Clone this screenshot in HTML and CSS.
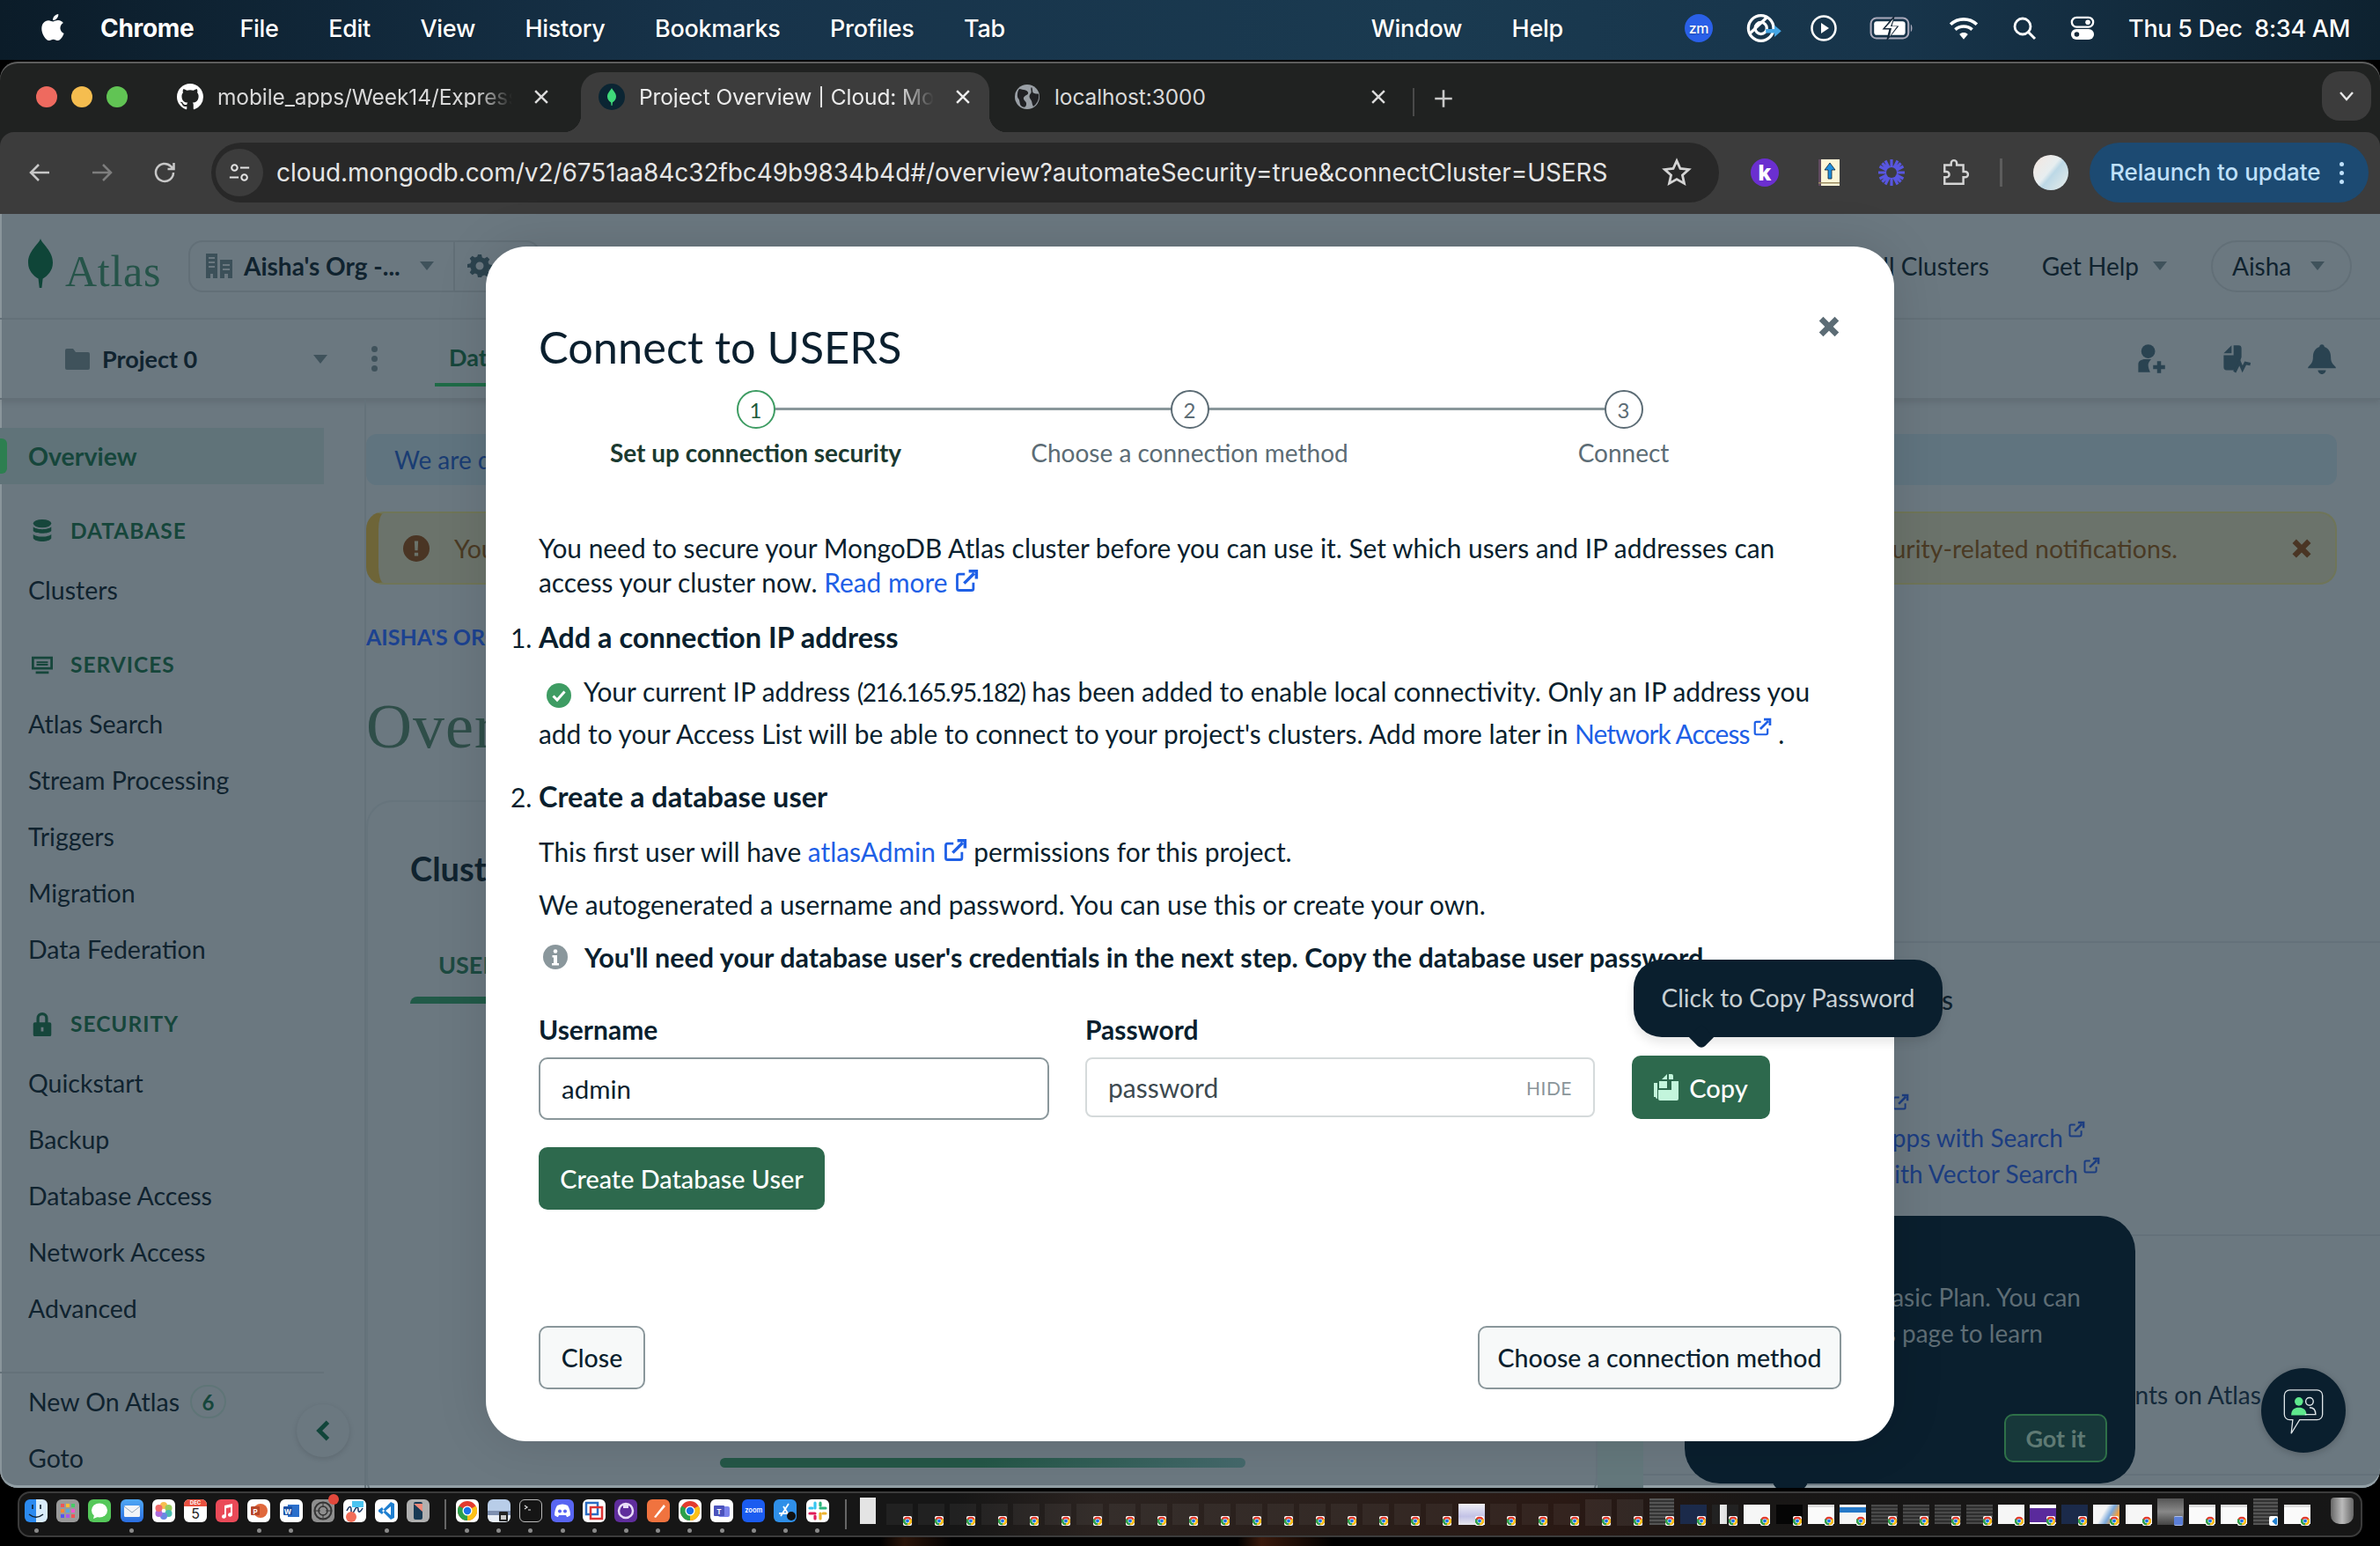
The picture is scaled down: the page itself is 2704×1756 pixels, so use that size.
FILE: index.html
```html
<!DOCTYPE html>
<html lang="en">
<head>
<meta charset="utf-8">
<title>Project Overview | Cloud: MongoDB Cloud</title>
<link rel="stylesheet" href="styles.css">
</head>
<body>
<svg class="defs" aria-hidden="true">
  <symbol id="ext" viewBox="0 0 16 16"><path d="M7 3.5H3.2a1.2 1.2 0 0 0-1.2 1.2v8.1A1.2 1.2 0 0 0 3.2 14h8.1a1.2 1.2 0 0 0 1.2-1.2V9" fill="none" stroke="currentColor" stroke-width="1.6"/><path d="M6.5 9.5 13 3M9.5 1.5H14.500V6.500" fill="none" stroke="currentColor" stroke-width="2"/></symbol>
  <symbol id="tri" viewBox="0 0 16 10"><path d="M0 0h16L8 10z" fill="currentColor"/></symbol>
  <symbol id="x" viewBox="0 0 16 16"><path d="M2 4.500 4.500 2 8 5.500 11.500 2 14 4.500 10.500 8 14 11.500 11.500 14 8 10.500 4.500 14 2 11.500 5.500 8z" fill="currentColor"/></symbol>
  <symbol id="chr" viewBox="0 0 24 24"><circle cx="12" cy="12" r="12" fill="#e33b2e"/><path d="M12 12 1.600 6 A12 12 0 0 0 12 24z" fill="#2ba14b"/><path d="M12 12 22.400 6A12 12 0 0 1 12 24z" fill="#fbc116"/><circle cx="12" cy="12" r="6" fill="#fff"/><circle cx="12" cy="12" r="4.600" fill="#1a73e8"/></symbol>
  <symbol id="leaf" viewBox="0 0 16 32"><path d="M8 0c1 3.500 8 8 8 15.500 0 5.500-3.500 8.500-6.500 10.500L8.800 32H7.300l-.7-6C3.500 24 0 21 0 15.500 0 8 7 3.500 8 0z" fill="currentColor"/></symbol>
</svg>

<header class="menubar">
  <svg class="apple" viewBox="0 0 24 24"><path d="M17.050 20.280c-.98.950-2.050.800-3.080.350-1.090-.460-2.090-.480-3.240 0-1.440.620-2.200.440-3.060-.350C2.790 15.250 3.510 7.590 9.050 7.310c1.350.070 2.290.740 3.080.800 1.180-.240 2.310-.930 3.570-.840 1.510.120 2.650.720 3.400 1.800-3.120 1.870-2.380 5.980.480 7.130-.57 1.500-1.310 2.990-2.540 4.090zM12.030 7.250c-.150-2.230 1.660-4.070 3.740-4.250.290 2.580-2.340 4.500-3.740 4.250z" fill="#fff"/></svg>
  <nav class="mb-menu">
    <b>Chrome</b><span>File</span><span>Edit</span><span>View</span><span>History</span><span>Bookmarks</span><span>Profiles</span><span>Tab</span>
  </nav>
  <nav class="mb-menu mb-right"><span>Window</span><span>Help</span></nav>
  <div class="tray">
    <svg class="t-ic t-zm" viewBox="0 0 32 32"><circle cx="16" cy="16" r="16" fill="#2a60e8"/><text x="16" y="21.500" font-size="16" text-anchor="middle" fill="#fff" font-family="Inter">zm</text></svg>
    <svg class="t-ic t-cc" viewBox="0 0 40 32"><g fill="none" stroke="#fff" stroke-width="3"><circle cx="17" cy="16" r="13"/><circle cx="17" cy="16" r="6"/><path d="M5 22 24 4"/></g><path d="M22 17h9v-4l7 6-7 6v-4h-9z" fill="#45a7e6"/></svg>
    <svg class="t-ic t-play" viewBox="0 0 32 32"><circle cx="16" cy="16" r="13.500" fill="none" stroke="#fff" stroke-width="2.500"/><path d="M13 10l9 6-9 6z" fill="#fff"/></svg>
    <svg class="t-ic t-bat" viewBox="0 0 48 28"><rect x="1.500" y="3" width="41" height="22" rx="6" fill="none" stroke="#aab" stroke-width="2"/><rect x="5" y="6.500" width="34" height="15" rx="3" fill="#fff"/><path d="M27 1 15 15h7l-3 12 12-15h-7z" fill="#16293a" stroke="#16293a" stroke-width="1"/><path d="M26 4 17 14h7l-2 9 8-11h-7z" fill="#fff"/><path d="M45 10v8c2-.5 2-7.500 0-8z" fill="#aab"/></svg>
    <svg class="t-ic t-wifi" viewBox="0 0 32 26"><g fill="none" stroke="#fff" stroke-width="3.500"><path d="M2 9c8-7.500 20-7.500 28 0"/><path d="M7 14.500c5-4.500 13-4.500 18 0"/></g><path d="M11.500 19.500c2.500-2.500 6.500-2.500 9 0L16 25z" fill="#fff"/></svg>
    <svg class="t-ic t-srch" viewBox="0 0 28 28"><circle cx="12" cy="12" r="9" fill="none" stroke="#fff" stroke-width="2.800"/><path d="M18.500 18.500 26 26" stroke="#fff" stroke-width="3"/></svg>
    <svg class="t-ic t-ctl" viewBox="0 0 30 30"><rect x="2" y="2" width="26" height="11.500" rx="5.700" fill="none" stroke="#fff" stroke-width="2.500"/><circle cx="21.500" cy="7.700" r="3" fill="#fff"/><rect x="1" y="16" width="28" height="13" rx="6.500" fill="#fff"/><circle cx="8" cy="22.500" r="3" fill="#16293a"/></svg>
    <span class="clock">Thu 5 Dec&nbsp; 8:34 AM</span>
  </div>
</header>

<div class="window">
  <div class="tabstrip">
    <div class="lights"><i class="l-r"></i><i class="l-y"></i><i class="l-g"></i></div>
    <div class="tab tab-first">
      <svg class="tab-ic" viewBox="0 0 16 16"><path fill="#fff" d="M8 0C3.580 0 0 3.580 0 8c0 3.540 2.290 6.530 5.470 7.590.4.070.55-.170.55-.380 0-.190-.010-.820-.010-1.490-2.010.370-2.530-.490-2.690-.940-.090-.230-.480-.940-.820-1.130-.280-.150-.680-.520-.010-.530.630-.010 1.080.580 1.230.820.720 1.210 1.870.870 2.330.660.070-.520.280-.870.510-1.070-1.780-.200-3.640-.890-3.640-3.950 0-.870.310-1.590.820-2.150-.08-.200-.36-1.020.08-2.120 0 0 .67-.21 2.200.82.640-.18 1.320-.27 2-.27.68 0 1.360.09 2 .27 1.530-1.040 2.200-.82 2.200-.82.44 1.100.16 1.920.08 2.120.51.56.82 1.270.82 2.150 0 3.070-1.870 3.750-3.650 3.950.29.25.54.73.54 1.480 0 1.070-.01 1.930-.01 2.200 0 .21.15.46.55.38A8.013 8.013 0 0016 8c0-4.420-3.580-8-8-8z"/></svg>
      <span class="tab-label">mobile_apps/Week14/Express</span>
      <svg class="tab-x" viewBox="0 0 16 16"><path d="M3 3l10 10M13 3 3 13" stroke="currentColor" stroke-width="1.800"/></svg>
    </div>
    <div class="tab tab-active">
      <svg class="tab-ic" viewBox="0 0 30 30"><circle cx="15" cy="15" r="15" fill="#0b2533"/><use href="#leaf" x="10" y="4" width="10" height="22" color="#3fd97a"/></svg>
      <span class="tab-label">Project Overview | Cloud: MongoDB</span>
      <svg class="tab-x" viewBox="0 0 16 16"><path d="M3 3l10 10M13 3 3 13" stroke="currentColor" stroke-width="1.800"/></svg>
    </div>
    <div class="tab tab-third">
      <svg class="tab-ic" viewBox="0 0 30 30"><circle cx="15" cy="15" r="14" fill="#9aa0a6"/><path d="M6 6c5 1 9 1 10 4s-4 3-5 6 4 4 3 8-4 3-6 1-1-6-3-8-1-9 1-11zM20 4c2 3 0 6 3 7s4 0 5 1c1 6-2 11-6 14-2-3-1-6-3-8s-2-5 0-7-1-5 1-7z" fill="#202124"/></svg>
      <span class="tab-label tab-plain">localhost:3000</span>
      <svg class="tab-x" viewBox="0 0 16 16"><path d="M3 3l10 10M13 3 3 13" stroke="currentColor" stroke-width="1.800"/></svg>
    </div>
    <i class="tab-sep"></i>
    <svg class="tab-plus" viewBox="0 0 24 24"><path d="M12 3v18M3 12h18" stroke="#c8c8c8" stroke-width="2.400"/></svg>
    <div class="tab-search"><svg viewBox="0 0 20 12"><path d="M3 2l7 8 7-8" fill="none" stroke="#e8e8e8" stroke-width="2.400"/></svg></div>
  </div>

  <div class="toolbar">
    <svg class="tb-ic" viewBox="0 0 28 28"><path d="M25 14H4M13 5l-9 9 9 9" fill="none" stroke="#c7c7c7" stroke-width="2.500"/></svg>
    <svg class="tb-ic tb-dim" viewBox="0 0 28 28"><path d="M3 14h21M15 5l9 9-9 9" fill="none" stroke="#7d7d7d" stroke-width="2.500"/></svg>
    <svg class="tb-ic" viewBox="0 0 28 28"><path d="M24 14a10 10 0 1 1-3-7.200L24 9.500M24.500 3v7h-7" fill="none" stroke="#c7c7c7" stroke-width="2.500"/></svg>
    <div class="omnibox">
      <span class="omni-tune"><svg viewBox="0 0 28 28"><g fill="none" stroke="#e3e3e3" stroke-width="2.200"><circle cx="8" cy="8" r="3.500"/><path d="M15 8h11M2 20h11"/><circle cx="20" cy="20" r="3.500"/></g></svg></span>
      <span class="url">cloud.mongodb.com/v2/6751aa84c32fbc49b9834b4d#/overview?automateSecurity=true&amp;connectCluster=USERS</span>
      <svg class="star" viewBox="0 0 28 28"><path d="M14 3l3.300 7.300 7.900.8-5.900 5.300 1.700 7.800L14 20.300l-7 3.900 1.700-7.800L2.800 11.100l7.900-.8z" fill="none" stroke="#d4d4d4" stroke-width="2.300"/></svg>
    </div>
    <svg class="ext-ic ext-k" viewBox="0 0 32 32"><circle cx="16" cy="16" r="16" fill="#6b2fd0"/><text x="16" y="25" font-size="25" font-weight="800" text-anchor="middle" fill="#fff" font-family="Inter">k</text></svg>
    <svg class="ext-ic ext-u" viewBox="0 0 32 32"><rect x="4" y="1" width="24" height="30" fill="#fdf6d8"/><path d="M4 1h3v30H4z" fill="#604a60"/><path d="M4 27h24v1.500H4z" fill="#9a8a60"/><path d="M17 5l6 8h-4v10h-4V13h-4z" fill="#1e8fe0" stroke="#123" stroke-width=".8"/></svg>
    <svg class="ext-ic ext-s" viewBox="0 0 32 32"><g stroke="#5856e0" stroke-width="3.200"><path d="M16 1v30M1 16h30M5.400 5.400l21.200 21.200M26.600 5.400 5.400 26.600M9 2.500l14 27M23 2.500 9 29.500M2.500 9l27 14M29.500 9l-27 14"/></g><circle cx="16" cy="16" r="6" fill="#3c3c3c"/></svg>
    <svg class="ext-ic ext-p" viewBox="0 0 30 30"><path d="M4 7h7V5a3 3 0 0 1 6 0v2h7v7h2a3 3 0 0 1 0 6h-2v7H4v-7h2a3 3 0 0 0 0-6H4z" fill="none" stroke="#d4d4d4" stroke-width="2.300"/></svg>
    <i class="tb-sep"></i>
    <span class="avatar"></span>
    <div class="relaunch"><span>Relaunch to update</span><i class="kebab"></i></div>
  </div>

  <div class="page">
    <div class="topnav">
      <a class="logo"><svg class="logo-leaf" viewBox="0 0 16 32"><use href="#leaf" color="#0f4538"/></svg><span>Atlas</span></a>
      <div class="org">
        <svg class="org-ic" viewBox="0 0 30 28"><path d="M0 0h13v28H8v-5H5v5H0zM3 4v2h7V4zM3 9v2h7V9zM3 14v2h7v-2zM16 7h14v21h-5v-5h-4v5h-5zM19 12v2h8v-2zM19 17v2h8v-2z" fill="#3c5059"/></svg>
        <b>Aisha's Org -...</b>
        <svg class="tri" viewBox="0 0 16 10"><use href="#tri"/></svg>
        <span class="org-gear"><svg viewBox="0 0 28 28"><path d="M12 1h4l.8 3.400 2.600 1.100 3-1.800 2.900 2.900-1.800 3 1.100 2.600 3.400.8v4l-3.400.8-1.100 2.600 1.800 3-2.900 2.900-3-1.800-2.600 1.100L16 27h-4l-.8-3.400-2.600-1.100-3 1.800-2.900-2.900 1.800-3-1.100-2.600L0 16v-4l3.400-.8 1.100-2.600-1.800-3 2.900-2.900 3 1.800 2.600-1.100zM14 9.500a4.500 4.500 0 1 0 0 9 4.500 4.500 0 0 0 0-9z" fill="#2c434e" fill-rule="evenodd"/></svg></span>
      </div>
      <div class="topnav-right">
        <span class="tn-link">All Clusters</span>
        <span class="tn-link tn-help">Get Help <svg class="tri" viewBox="0 0 16 10"><use href="#tri"/></svg></span>
        <span class="user-pill">Aisha <svg class="tri" viewBox="0 0 16 10"><use href="#tri"/></svg></span>
      </div>
    </div>

    <div class="subnav">
      <svg class="folder" viewBox="0 0 28 24"><path d="M0 2a2 2 0 0 1 2-2h7l3 4h14a2 2 0 0 1 2 2v16a2 2 0 0 1-2 2H2a2 2 0 0 1-2-2z" fill="#3f525b"/></svg>
      <b class="project">Project 0</b>
      <svg class="tri tri-project" viewBox="0 0 16 10"><use href="#tri"/></svg>
      <span class="dots"><i></i><i></i><i></i></span>
      <span class="subtab">Data Services</span>
      <div class="sub-right">
        <svg class="sub-ic" viewBox="0 0 32 32"><circle cx="13" cy="8" r="7" fill="#2a4351"/><path d="M3 29V21c0-3 3-5 7-5h6c-2 2-3 4-3 6s1 5 2 7z" fill="#2a4351"/><path d="M22 18h4v4h4v4h-4v4h-4v-4h-4v-4h4z" fill="#2a4351"/></svg>
        <svg class="sub-ic" viewBox="0 0 32 32"><path d="M11 2 3 10h8zM13 2h5c2 0 3 1 3 3v9l-5 13H6c-2 0-3-1-3-3V12h10z" fill="#2a4351"/><path d="M14 29l5-10 3 7 3-6 5 1" fill="none" stroke="#2a4351" stroke-width="3"/></svg>
        <svg class="sub-ic" viewBox="0 0 32 32"><path d="M16 1c1.500 0 2.500 1 2.500 2.500C23 5 25 9 25 14c0 5 2 7 5 10v1H2v-1c3-3 5-5 5-10 0-5 2-9 6.500-10.500C13.500 2 14.500 1 16 1zM12 27h8c0 2-2 4-4 4s-4-2-4-4z" fill="#2a4351"/></svg>
      </div>
    </div>

    <div class="content">
      <aside class="sidebar">
        <a class="side-active">Overview</a>
        <h4 class="side-head"><svg viewBox="0 0 24 30"><ellipse cx="12" cy="6" rx="11" ry="5" fill="#16463b"/><path d="M1 10c3 4 19 4 22 0v5c-3 4-19 4-22 0zM1 19c3 4 19 4 22 0v5c-3 5-19 5-22 0z" fill="#16463b"/></svg>DATABASE</h4>
        <a class="side-item">Clusters</a>
        <h4 class="side-head"><svg viewBox="0 0 26 24"><path d="M0 2h26v16H0zM3 5v10h20V5zM6 8h14v2H6zM6 11h14v2H6zM5 20h16v3H5z" fill="#16463b"/></svg>SERVICES</h4>
        <a class="side-item">Atlas Search</a>
        <a class="side-item">Stream Processing</a>
        <a class="side-item">Triggers</a>
        <a class="side-item">Migration</a>
        <a class="side-item">Data Federation</a>
        <h4 class="side-head"><svg viewBox="0 0 22 30"><path d="M4 13V8a7 7 0 0 1 14 0v5h2a2 2 0 0 1 2 2v13a2 2 0 0 1-2 2H2a2 2 0 0 1-2-2V15a2 2 0 0 1 2-2zm3.500 0h7V8a3.500 3.500 0 0 0-7 0zM9.500 19v5h3v-5z" fill="#16463b" fill-rule="evenodd"/></svg>SECURITY</h4>
        <a class="side-item">Quickstart</a>
        <a class="side-item">Backup</a>
        <a class="side-item">Database Access</a>
        <a class="side-item">Network Access</a>
        <a class="side-item">Advanced</a>
        <hr class="side-sep">
        <a class="side-item">New On Atlas <span class="badge">6</span></a>
        <a class="side-item">Goto</a>
      </aside>

      <main class="main">
        <div class="banner-info">We are deploying your changes</div>
        <div class="banner-warn">
          <svg class="warn-ic" viewBox="0 0 28 28"><circle cx="14" cy="14" r="14" fill="#4a3524"/><path d="M12 6h4l-.5 10h-3zM12 18.500h4v3.500h-4z" fill="#6b736b"/></svg>
          <span class="warn-text"><span>You have not added a phone number.</span><span>Add one to your account to receive security-related notifications.</span></span>
          <svg class="warn-x" viewBox="0 0 16 16"><use href="#x"/></svg>
        </div>
        <div class="crumb">AISHA'S ORG - 2024-12-05 &gt; PROJECT 0</div>
        <h1 class="page-title">Overview</h1>
        <div class="cards">
          <section class="clusters-card">
            <h2>Clusters</h2>
            <div class="card-tab">USERS</div>
            <i class="scrollbar"></i>
          </section>
          <i class="gutter"></i>
          <section class="right-col">
            <div class="rc-top"></div>
            <div class="rc-res">
              <h3 class="rc-title">Atlas Resources</h3>
              <a class="rc-link rc-l1">Get started <svg class="ext-i" viewBox="0 0 16 16"><use href="#ext"/></svg></a>
              <a class="rc-link rc-l2">Build Apps with Search <svg class="ext-i ext-sup" viewBox="0 0 16 16"><use href="#ext"/></svg></a>
              <a class="rc-link rc-l3">Build AI with Vector Search <svg class="ext-i ext-sup" viewBox="0 0 16 16"><use href="#ext"/></svg></a>
            </div>
            <div class="rc-news"><p>What's new: Recent improvements on Atlas</p></div>
          </section>
        </div>
      </main>

      <span class="collapse"><svg viewBox="0 0 16 24"><path d="M13 3 4 12l9 9" fill="none" stroke="#11453a" stroke-width="4.500"/></svg></span>

      <aside class="guide">
        <p class="g-l1">You are on the Basic Plan. You can</p>
        <p class="g-l2">Visit this page to learn</p>
        <span class="got-it">Got it</span>
      </aside>

      <span class="chat"><svg viewBox="0 0 52 60"><path d="M8 1h36a7 7 0 0 1 7 7v25a7 7 0 0 1-7 7H21L10 58l2-18H8a7 7 0 0 1-7-7V8a7 7 0 0 1 7-7z" fill="none" stroke="#dfe5e8" stroke-width="1.500"/><circle cx="20" cy="16" r="5.500" fill="#5fe88d"/><path d="M10 34c0-7 4-10 10-10s10 3 10 10z" fill="#5fe88d"/><circle cx="34" cy="16" r="5" fill="none" stroke="#dfe5e8" stroke-width="1.600"/><path d="M28 33h14c0-6-3-9-8-9" fill="none" stroke="#dfe5e8" stroke-width="1.600"/></svg></span>
    </div>
  </div>
</div>

<div class="dock">
  <div class="dk"><span class="app a-finder"><svg viewBox="0 0 26 26"><path d="M9 6v5M18 6v5M5 17c5 4 11 4 16 0" fill="none" stroke="#123" stroke-width="1.600"/></svg></span><i class="on"></i></div>
  <div class="dk"><span class="app a-launch"><svg viewBox="0 0 26 26"><g fill="#e55"><rect x="5" y="5" width="4" height="4"/></g><rect x="11" y="5" width="4" height="4" fill="#fb3"/><rect x="17" y="5" width="4" height="4" fill="#4c6"/><rect x="5" y="11" width="4" height="4" fill="#f83"/><rect x="11" y="11" width="4" height="4" fill="#5ad"/><rect x="17" y="11" width="4" height="4" fill="#e5c"/><rect x="5" y="17" width="4" height="4" fill="#55e"/><rect x="11" y="17" width="4" height="4" fill="#a5e"/><rect x="17" y="17" width="4" height="4" fill="#e55"/></svg></span><i></i></div>
  <div class="dk"><span class="app a-msg"><svg viewBox="0 0 26 26"><ellipse cx="13" cy="12.500" rx="9" ry="8" fill="#fff"/><path d="M7 18l-1 4 5-2z" fill="#fff"/></svg></span><i></i></div>
  <div class="dk"><span class="app a-mail"><svg viewBox="0 0 26 26"><rect x="4" y="7" width="18" height="13" rx="1.500" fill="#f2f4f8"/><path d="M4 8l9 7 9-7" fill="none" stroke="#9ab" stroke-width="1"/></svg></span><i class="on"></i></div>
  <div class="dk"><span class="app a-white"><svg viewBox="0 0 26 26"><g opacity=".9"><circle cx="13" cy="7" r="4" fill="#f6b73c"/><circle cx="18.500" cy="10" r="4" fill="#8cc84b"/><circle cx="18.500" cy="16" r="4" fill="#37b5a6"/><circle cx="13" cy="19" r="4" fill="#5a7de0"/><circle cx="7.500" cy="16" r="4" fill="#a45ad6"/><circle cx="7.500" cy="10" r="4" fill="#ef5a5a"/></g></svg></span><i></i></div>
  <div class="dk"><span class="app a-cal"><b>DEC</b><em>5</em></span><i></i></div>
  <div class="dk"><span class="app a-music"><svg viewBox="0 0 26 26"><path d="M10 7l9-2v12.500a2.500 2.200 0 1 1-2-2.200V9l-5 1.100v9.400a2.500 2.200 0 1 1-2-2.200z" fill="#fff"/></svg></span><i></i></div>
  <div class="dk"><span class="app a-white"><svg viewBox="0 0 26 26"><circle cx="15" cy="13" r="8" fill="#e0683c"/><rect x="4" y="8" width="10" height="10" rx="1" fill="#b7472a"/><text x="9" y="16.500" font-size="8" text-anchor="middle" fill="#fff" font-family="Inter" font-weight="700">P</text></svg></span><i class="on"></i></div>
  <div class="dk"><span class="app a-white"><svg viewBox="0 0 26 26"><rect x="9" y="6" width="13" height="14" fill="#2b6fcb"/><rect x="4" y="8" width="10" height="10" rx="1" fill="#1c4fa3"/><text x="9" y="16.500" font-size="8" text-anchor="middle" fill="#fff" font-family="Inter" font-weight="700">W</text></svg></span><i class="on"></i></div>
  <div class="dk"><span class="app a-set"><svg viewBox="0 0 26 26"><circle cx="13" cy="13" r="9.500" fill="none" stroke="#333" stroke-width="2"/><circle cx="13" cy="13" r="5" fill="none" stroke="#333" stroke-width="1.500"/><path d="M13 3v6M4 13h6M16 13h6M13 17v6" stroke="#333"/></svg><u class="d-badge"></u></span><i></i></div>
  <div class="dk"><span class="app a-white"><svg viewBox="0 0 26 26"><path d="M4 13c3-6 5-6 5 0s2 3 4-1 4-4 4 0 3 2 5-2" fill="none" stroke="#1a3a66" stroke-width="1.600"/><circle cx="9" cy="20" r="6" fill="#f26d58"/><rect x="10" y="2" width="13" height="7" fill="#4cc4f0"/></svg></span><i></i></div>
  <div class="dk"><span class="app a-white"><svg viewBox="0 0 26 26"><path d="M18 3 8 13l10 10 4-2V5zM18 8l-6 5 6 5zM8 9 4 12v2l4 3 3-4z" fill="#1f7fd0" fill-rule="evenodd"/></svg></span><i class="on"></i></div>
  <div class="dk"><span class="app a-iph"><svg viewBox="0 0 26 26"><rect x="8" y="3" width="10" height="20" rx="2" fill="#173a55"/><path d="M8 5h10v9z" fill="#f08a7a"/></svg></span><i></i></div>
  <u class="dock-sep"></u>
  <div class="dk"><span class="app a-white"><svg viewBox="0 0 26 26"><use href="#chr" x="2" y="2" width="22" height="22"/></svg></span><i class="on"></i></div>
  <div class="dk"><span class="app a-prev"><svg viewBox="0 0 26 26"><rect y="13" width="26" height="5" fill="#7d8fb0"/><rect x="13" y="14" width="10" height="11" rx="1" fill="#222"/><rect x="15" y="18" width="6" height="5" fill="#ccc"/></svg></span><i class="on"></i></div>
  <div class="dk"><span class="app a-term"><svg viewBox="0 0 26 26"><path d="M5 6l3 2-3 2M9 11h3" fill="none" stroke="#ddd" stroke-width="1.200"/></svg></span><i class="on"></i></div>
  <div class="dk"><span class="app a-disc"><svg viewBox="0 0 26 26"><path d="M7 7c4-2 8-2 12 0 2 3 3 7 3 11-2 1.500-3 2-4 2l-1-2H9l-1 2c-1 0-2-.5-4-2 0-4 1-8 3-11z" fill="#fff"/><circle cx="10" cy="13.500" r="2" fill="#5865f2"/><circle cx="16" cy="13.500" r="2" fill="#5865f2"/></svg></span><i class="on"></i></div>
  <div class="dk"><span class="app a-white"><svg viewBox="0 0 26 26"><rect x="4" y="4" width="13" height="13" fill="none" stroke="#2a6cc4" stroke-width="2.500"/><rect x="9" y="9" width="13" height="13" fill="none" stroke="#d33" stroke-width="2.500"/></svg></span><i class="on"></i></div>
  <div class="dk"><span class="app a-gh"><svg viewBox="0 0 26 26"><circle cx="13" cy="13" r="8" fill="none" stroke="#e8dcf7" stroke-width="2.500"/><path d="M10 5h6v5h-6z" fill="#e8dcf7"/></svg></span><i class="on"></i></div>
  <div class="dk"><span class="app a-post"><svg viewBox="0 0 26 26"><path d="M8 20 19 6l2 2L10 21z" fill="#fff"/></svg></span><i class="on"></i></div>
  <div class="dk"><span class="app a-white"><svg viewBox="0 0 26 26"><use href="#chr" x="2" y="2" width="22" height="22"/></svg></span><i class="on"></i></div>
  <div class="dk"><span class="app a-white"><svg viewBox="0 0 26 26"><rect x="9" y="8" width="13" height="12" rx="2" fill="#7b83eb"/><rect x="4" y="7" width="12" height="12" rx="1" fill="#4b53bc"/><text x="10" y="16.500" font-size="8" text-anchor="middle" fill="#fff" font-family="Inter" font-weight="700">T</text></svg></span><i class="on"></i></div>
  <div class="dk"><span class="app a-zoom">zoom</span><i class="on"></i></div>
  <div class="dk"><span class="app a-store"><svg viewBox="0 0 26 26"><path d="M8 19 17 5M18 19 11 8M6 16h15" stroke="#fff" stroke-width="1.800" fill="none"/><circle cx="20" cy="19" r="5" fill="#111"/></svg></span><i class="on"></i></div>
  <div class="dk"><span class="app a-white"><svg viewBox="0 0 26 26"><g stroke-width="3.200" stroke-linecap="round"><path d="M10 4v6" stroke="#36c5f0"/><path d="M22 10h-6" stroke="#2eb67d"/><path d="M16 22v-6" stroke="#ecb22e"/><path d="M4 16h6" stroke="#e01e5a"/><path d="M4 10h3" stroke="#36c5f0"/><path d="M16 4v3" stroke="#2eb67d"/><path d="M22 16h-3" stroke="#ecb22e"/><path d="M10 22v-3" stroke="#e01e5a"/></g></svg></span><i class="on"></i></div>
  <u class="dock-sep dock-sep2"></u>
  <div class="dk dk-doc"><span class="doc"></span></div>
  <div class="thumb"><svg viewBox="0 0 24 24"><use href="#chr"/></svg></div>
  <div class="thumb"><svg viewBox="0 0 24 24"><use href="#chr"/></svg></div>
  <div class="thumb"><svg viewBox="0 0 24 24"><use href="#chr"/></svg></div>
  <div class="thumb"><svg viewBox="0 0 24 24"><use href="#chr"/></svg></div>
  <div class="thumb"><svg viewBox="0 0 24 24"><use href="#chr"/></svg></div>
  <div class="thumb"><svg viewBox="0 0 24 24"><use href="#chr"/></svg></div>
  <div class="thumb"><svg viewBox="0 0 24 24"><use href="#chr"/></svg></div>
  <div class="thumb"><svg viewBox="0 0 24 24"><use href="#chr"/></svg></div>
  <div class="thumb"><svg viewBox="0 0 24 24"><use href="#chr"/></svg></div>
  <div class="thumb"><svg viewBox="0 0 24 24"><use href="#chr"/></svg></div>
  <div class="thumb"><svg viewBox="0 0 24 24"><use href="#chr"/></svg></div>
  <div class="thumb"><svg viewBox="0 0 24 24"><use href="#chr"/></svg></div>
  <div class="thumb"><svg viewBox="0 0 24 24"><use href="#chr"/></svg></div>
  <div class="thumb"><svg viewBox="0 0 24 24"><use href="#chr"/></svg></div>
  <div class="thumb"><svg viewBox="0 0 24 24"><use href="#chr"/></svg></div>
  <div class="thumb"><svg viewBox="0 0 24 24"><use href="#chr"/></svg></div>
  <div class="thumb"><svg viewBox="0 0 24 24"><use href="#chr"/></svg></div>
  <div class="thumb"><svg viewBox="0 0 24 24"><use href="#chr"/></svg></div>
  <div class="thumb th-lilac"><svg viewBox="0 0 24 24"><use href="#chr"/></svg></div>
  <div class="thumb"><svg viewBox="0 0 24 24"><use href="#chr"/></svg></div>
  <div class="thumb"><svg viewBox="0 0 24 24"><use href="#chr"/></svg></div>
  <div class="thumb"><svg viewBox="0 0 24 24"><use href="#chr"/></svg></div>
  <div class="thumb th-tall0"><svg viewBox="0 0 24 24"><use href="#chr"/></svg></div>
  <div class="thumb th-tall0"><svg viewBox="0 0 24 24"><use href="#chr"/></svg></div>
  <div class="thumb th-tallg"><svg viewBox="0 0 24 24"><use href="#chr"/></svg></div>
  <div class="thumb th-navy"><svg viewBox="0 0 24 24"><use href="#chr"/></svg></div>
  <div class="thumb th-bw"><svg viewBox="0 0 24 24"><use href="#chr"/></svg></div>
  <div class="thumb th-white"><svg viewBox="0 0 24 24"><use href="#chr"/></svg></div>
  <div class="thumb th-black"><svg viewBox="0 0 24 24"><use href="#chr"/></svg></div>
  <div class="thumb th-page"><svg viewBox="0 0 24 24"><use href="#chr"/></svg></div>
  <div class="thumb th-blue"><svg viewBox="0 0 24 24"><use href="#chr"/></svg></div>
  <div class="thumb th-txt"><svg viewBox="0 0 24 24"><use href="#chr"/></svg></div>
  <div class="thumb th-txt"><svg viewBox="0 0 24 24"><use href="#chr"/></svg></div>
  <div class="thumb th-txt"><svg viewBox="0 0 24 24"><use href="#chr"/></svg></div>
  <div class="thumb th-txt"><svg viewBox="0 0 24 24"><use href="#chr"/></svg></div>
  <div class="thumb th-white"><svg viewBox="0 0 24 24"><use href="#chr"/></svg></div>
  <div class="thumb th-purple"><svg viewBox="0 0 24 24"><use href="#chr"/></svg></div>
  <div class="thumb th-navy"><svg viewBox="0 0 24 24"><use href="#chr"/></svg></div>
  <div class="thumb th-multi"><svg viewBox="0 0 24 24"><use href="#chr"/></svg></div>
  <div class="thumb th-white"><svg viewBox="0 0 24 24"><use href="#chr"/></svg></div>
  <div class="thumb th-tallp"><svg viewBox="0 0 24 24"><rect width="24" height="24" fill="#5b7fd8"/></svg></div>
  <div class="thumb th-page"><svg viewBox="0 0 24 24"><use href="#chr"/></svg></div>
  <div class="thumb th-page"><svg viewBox="0 0 24 24"><use href="#chr"/></svg></div>
  <div class="thumb th-tallg"><svg viewBox="0 0 24 24"><path d="M18 3 8 13l10 10 4-2V5z" fill="#1f7fd0"/></svg></div>
  <div class="thumb th-page"><svg viewBox="0 0 24 24"><use href="#chr"/></svg></div>
  <div class="dk-trash"></div>
</div>

<div class="modal" role="dialog">
  <svg class="modal-x" viewBox="0 0 16 16"><use href="#x"/></svg>
  <h2 class="modal-title">Connect to USERS</h2>
  <div class="stepper">
    <div class="step step-on"><span class="step-n">1</span><span class="step-l">Set up connection security</span></div>
    <div class="step"><span class="step-n">2</span><span class="step-l">Choose a connection method</span></div>
    <div class="step"><span class="step-n">3</span><span class="step-l">Connect</span></div>
  </div>
  <p class="intro">You need to secure your MongoDB Atlas cluster before you can use it. Set which users and IP addresses can access your cluster now. <a class="lnk">Read more <svg class="ext-i ext-big" viewBox="0 0 16 16"><use href="#ext"/></svg></a></p>
  <ol class="steps">
    <li>
      <h3>Add a connection IP address</h3>
      <p class="ip-note"><svg class="ok" viewBox="0 0 28 28"><circle cx="14" cy="14" r="14" fill="#3e9c63"/><path d="M7.500 14.500l4.500 4.500 8.500-9.500" fill="none" stroke="#fff" stroke-width="3"/></svg>Your current IP address <span class="num">(216.165.95.182)</span> has been added to enable local connectivity. Only an IP address you add to your Access List will be able to connect to your project's clusters. Add more later in <a class="lnk lnk-tight">Network Access<svg class="ext-i ext-sup2" viewBox="0 0 16 16"><use href="#ext"/></svg></a> .</p>
    </li>
    <li>
      <h3>Create a database user</h3>
      <p class="u1">This first user will have <a class="lnk">atlasAdmin <svg class="ext-i ext-big" viewBox="0 0 16 16"><use href="#ext"/></svg></a> permissions for this project.</p>
      <p class="u2">We autogenerated a username and password. You can use this or create your own.</p>
      <p class="u3"><svg class="info" viewBox="0 0 28 28"><circle cx="14" cy="14" r="14" fill="#8a979c"/><circle cx="14" cy="7.500" r="2.300" fill="#fff"/><path d="M10.500 12H16v9h2v2.500h-8V21h2v-6.500h-1.500z" fill="#fff"/></svg><b>You'll need your database user's credentials in the next step. Copy the database user password.</b></p>
    </li>
  </ol>
  <div class="creds">
    <label class="fld fld-u"><span>Username</span><input class="inp" value="admin" readonly></label>
    <label class="fld fld-p"><span>Password</span><span class="pw"><span class="pw-v">password</span><em>HIDE</em></span></label>
    <button class="copy"><svg viewBox="0 0 28 30"><path d="M15 0 9 6h6zM17 0h3a2 2 0 0 1 2 2v4h-5zM6 8h9v8H6zM0 10h4v18a2 2 0 0 1-2-2H0zM5 18h15V8h8v20a2 2 0 0 1-2 2H7a2 2 0 0 1-2-2z" fill="#c3f5dc"/></svg>Copy</button>
  </div>
  <button class="create">Create Database User</button>
  <div class="modal-foot">
    <button class="ghost">Close</button>
    <button class="ghost">Choose a connection method</button>
  </div>
  <div class="tip">Click to Copy Password</div>
</div>
</body>
</html>
```
FILE: styles.css
```css
* { box-sizing: border-box; }
html, body { margin: 0; padding: 0; }
body {
  width: 2704px; height: 1756px; overflow: hidden; position: relative;
  background:
    linear-gradient(90deg, transparent 37%, #2a1409 38%, #000 40%, transparent 52%, #3a1a0c 53%, #000 56%, #000 100%) 0 100% / 100% 10px no-repeat,
    #000;
  font-family: Lato, "Noto Sans", sans-serif;
  display: flex; flex-direction: column;
  color: #10232f;
}
p, h1, h2, h3, h4 { margin: 0; }
a { color: inherit; }
.defs { display: none; }
i, u { font-style: normal; text-decoration: none; }

/* menu bar */
.menubar {
  height: 68px; margin-bottom: 2px; flex: none; display: flex; align-items: center; color: #fff;
  font: 500 27px/1 Inter, sans-serif; letter-spacing: -.3px;
  background: linear-gradient(90deg, #0b1c29 0%, #17334a 30%, #1a3a50 60%, #17344a 80%, #0e2230 100%);
  text-shadow: 0 1px 2px rgba(0,0,0,.3);
}
.apple { width: 40px; height: 42px; margin-left: 40px; margin-right: 34px; margin-top: -6px; flex: none; }
.mb-menu { display: flex; gap: 56.500px; align-items: center; margin-top: -4px; }
.mb-menu b { font-weight: 700; width: 108px; margin-right: -6px; font-size: 28px; }
.mb-right { margin-left: 416px; }
.tray { margin-left: auto; margin-right: 34px; display: flex; align-items: center; margin-top: -4px; }
.t-ic { width: 32px; height: 32px; flex: none; margin-right: 40px; }
.t-zm { margin-right: 36px; }
.t-cc { width: 44px; height: 36px; margin-right: 30px; }
.t-play { margin-right: 38px; }
.t-bat { width: 50px; height: 30px; margin-right: 40px; margin-left: -2px; }
.t-wifi { width: 34px; height: 28px; margin-right: 38px; }
.t-srch { width: 28px; height: 28px; margin-right: 38px; }
.t-ctl { width: 28px; height: 30px; margin-right: 38px; }
.clock { white-space: nowrap; }

/* window */
.window {
  height: 1620px; flex: none; display: flex; flex-direction: column; overflow: hidden;
  border-radius: 20px; box-shadow: inset 0 2px 0 #5d5d5d;
  background: #202221;
}
.tabstrip { height: 80px; flex: none; display: flex; align-items: flex-start; padding-top: 12px; color: #d9d9d9; }
.lights { display: flex; gap: 16px; margin-left: 41px; margin-top: 16px; width: 140px; flex: none; }
.lights i { width: 24px; height: 24px; border-radius: 50%; }
.l-r { background: #ee6a5f; } .l-y { background: #f5bd4f; } .l-g { background: #61c454; }
.tab {
  width: 464px; height: 68px; padding: 0 19px 12px 20px; display: flex; align-items: center; position: relative; flex: none;
  font: 400 24.500px/1 Inter, sans-serif; letter-spacing: -.1px;
}
.tab-first { width: 479px; }
.tab-third { padding-left: 28px; width: 472px; }
.tab-active { background: #3c3c3c; border-radius: 22px 22px 0 0; color: #ececec; }
.tab-active::before, .tab-active::after { content: ""; position: absolute; bottom: 0; width: 20px; height: 20px; }
.tab-active::before { left: -20px; background: radial-gradient(circle at 0 0, transparent 20px, #3c3c3c 20.500px); }
.tab-active::after { right: -20px; background: radial-gradient(circle at 100% 0, transparent 20px, #3c3c3c 20.500px); }
.tab-ic { width: 30px; height: 30px; flex: none; margin-right: 16px; }
.tab-label { width: 335px; flex: none; white-space: nowrap; overflow: hidden; -webkit-mask-image: linear-gradient(90deg, #000 88%, transparent); mask-image: linear-gradient(90deg, #000 88%, transparent); }
.tab-plain { -webkit-mask-image: none; mask-image: none; }
.tab-x { width: 22px; height: 22px; margin-left: 22px; flex: none; }
.tab-sep { width: 2px; height: 32px; background: #4a4a4a; margin: 18px 0 0 9px; flex: none; }
.tab-plus { width: 26px; height: 26px; margin: 17px 0 0 20px; flex: none; }
.tab-search { width: 56px; height: 56px; margin-left: auto; margin-right: 10px; border-radius: 20px; background: #3c3c3c; display: flex; align-items: center; justify-content: center; margin-top: -1px; }
.tab-search svg { width: 20px; height: 12px; }

.toolbar { height: 93px; flex: none; background: #3c3c3c; border-radius: 16px 16px 0 0; display: flex; align-items: center; padding-bottom: 1px; }
.tb-ic { width: 28px; height: 28px; flex: none; margin-left: 31px; margin-right: 12px; }
.tb-ic:first-child { margin-left: 31px; }
.omnibox {
  width: 1713px; height: 68px; margin-left: 27px; border-radius: 34px; background: #282828; flex: none;
  display: flex; align-items: center; padding-left: 5px; color: #e6e6e6;
}
.omni-tune { width: 54px; height: 54px; border-radius: 50%; background: #3c3c3c; display: flex; align-items: center; justify-content: center; flex: none; }
.omni-tune svg { width: 26px; height: 26px; }
.url { margin-left: 15px; font: 400 28px/1 Inter, sans-serif; letter-spacing: -.06px; white-space: nowrap; }
.star { width: 34px; height: 34px; margin-left: auto; margin-right: 31px; flex: none; }
.ext-ic { flex: none; width: 32px; height: 32px; }
.ext-k { margin-left: 36px; }
.ext-u { margin-left: 41px; }
.ext-s { margin-left: 39px; }
.ext-p { margin-left: 40px; }
.tb-sep { width: 3px; height: 32px; background: #5c5c5c; margin-left: 35px; flex: none; }
.avatar { width: 40px; height: 40px; border-radius: 50%; margin-left: 35px; flex: none; background: linear-gradient(130deg, #f4e6de 0%, #e7eef0 45%, #bcd8e6 55%, #eaeeea 100%); }
.relaunch {
  margin-left: 24px; width: 317px; height: 68px; border-radius: 34px; background: #1c4a72; color: #bfe0fa; flex: none;
  display: flex; align-items: center; padding-left: 23px; font: 500 26px/1 Inter, sans-serif;
}
.kebab { width: 5px; height: 5px; border-radius: 50%; background: #bfe0fa; margin-left: 21px; box-shadow: 0 -10px 0 #bfe0fa, 0 10px 0 #bfe0fa; }

/* page */
.page { flex: 1; min-height: 0; display: flex; flex-direction: column; background: #6b7880; position: relative; border-radius: 0 0 20px 20px; box-shadow: inset 2px 0 0 #8a959b, inset 0 -3px 0 #93a0a6; overflow: hidden; }
.topnav { height: 120px; flex: none; display: flex; align-items: center; padding: 0 32px; border-bottom: 2px solid #647179; }
.logo { display: flex; align-items: flex-end; width: 182px; margin-top: -6px; color: #265449; font: 400 50px/1 "Liberation Serif", serif; flex: none; }
.logo-leaf { width: 28px; height: 58px; margin-right: 14px; flex: none; }
.logo span { letter-spacing: .7px; margin-bottom: -5px; }
.org { width: 400px; height: 59px; flex: none; border: 2px solid #626f77; border-radius: 16px; display: flex; align-items: center; padding-left: 18px; font-size: 28px; color: #10232f; }
.org-ic { width: 30px; height: 28px; flex: none; margin-right: 13px; }
.org b { width: 184px; font-weight: 700; white-space: nowrap; }
.tri { width: 16px; height: 10px; color: #3f525b; flex: none; }
.org .tri { margin-left: 16px; }
.org-gear { margin-left: 22px; border-left: 2px solid #626f77; height: 100%; padding-left: 14px; display: flex; align-items: center; }
.org-gear svg { width: 28px; height: 28px; }
.topnav-right { margin-left: auto; display: flex; align-items: center; font-size: 28px; color: #10232f; }
.tn-link { white-space: nowrap; }
.tn-help { margin-left: 60px; display: flex; align-items: center; }
.tn-help .tri { margin-left: 16px; }
.user-pill { margin-left: 50px; width: 160px; height: 59px; border-radius: 30px; border: 2px solid #626f77; display: flex; align-items: center; padding-left: 22px; }
.user-pill .tri { margin-left: 22px; }

.subnav { height: 91px; flex: none; display: flex; align-items: center; padding-left: 74px; box-shadow: 0 4px 6px rgba(0,0,0,.08); border-bottom: 2px solid #636f77; position: relative; }
.folder { width: 28px; height: 24px; flex: none; margin-right: 14px; }
.project { font-size: 27px; color: #10232f; width: 240px; flex: none; white-space: nowrap; }
.tri-project { width: 16px; height: 10px; }
.dots { display: flex; flex-direction: column; gap: 4px; margin-left: 50px; flex: none; }
.dots i { width: 7px; height: 7px; border-radius: 50%; background: #3f525b; }
.subtab { margin-left: 65px; padding: 0 16px; height: 91px; line-height: 88px; color: #16463b; font-weight: 700; font-size: 27px; white-space: nowrap; flex: none; position: relative; }
.subtab::after { content: ""; position: absolute; left: 0; right: 0; bottom: 14px; height: 4px; background: #1f6b47; }
.sub-right { margin-left: auto; margin-right: 48px; display: flex; gap: 61px; }
.sub-ic { width: 36px; height: 38px; }

.content { flex: 1; min-height: 0; display: flex; position: relative; }
.sidebar { width: 416px; flex: none; border-right: 2px solid #64727a; padding-top: 32px; font-size: 28.500px; color: #10232f; }
.side-active, .side-item { display: flex; align-items: center; height: 64px; padding-left: 32px; white-space: nowrap; }
.side-active { width: 368px; background: #607379; color: #16463b; font-weight: 700; position: relative; }
.side-active::before { content: ""; position: absolute; left: 0; top: 12px; bottom: 12px; width: 8px; border-radius: 0 6px 6px 0; background: #2d7f50; }
.side-head { display: flex; align-items: center; height: 68px; margin-top: 20px; padding: 0 0 3px 36px; font-size: 24.500px; font-weight: 700; letter-spacing: 1px; color: #16463b; }
.side-head svg { width: 24px; height: 28px; margin-right: 20px; flex: none; }
.side-sep { margin: 40px 0 0; width: 368px; height: 2px; border: 0; background: #647179; }
.side-item .badge { margin-left: 12px; width: 41px; height: 38px; border-radius: 19px; border: 2px solid #5f7577; color: #16463b; font-weight: 700; font-size: 24px; display: flex; align-items: center; justify-content: center; }

.main { flex: 1; min-width: 0; padding: 39px 49px 0 0; }
.banner-info { height: 58px; background: #60747f; border-radius: 12px; padding-left: 32px; font-size: 28px; line-height: 58px; color: #1a3d73; }
.banner-warn { height: 83px; margin-top: 30px; background: #6b736b; border: 2px solid #6f7558; border-left: 14px solid #6e6538; border-radius: 20px; display: flex; align-items: center; padding-left: 28px; color: #4a3a24; font-size: 28.500px; }
.warn-ic { width: 30px; height: 30px; flex: none; margin-right: 28px; }
.warn-text { width: 1958px; flex: none; display: flex; justify-content: space-between; white-space: nowrap; }
.warn-x { width: 28px; height: 28px; margin-left: auto; margin-right: 24px; color: #4a3524; flex: none; }
.crumb { margin-top: 42px; line-height: 34px; font-size: 25px; font-weight: 700; color: #1c4290; white-space: nowrap; }
.page-title { margin-top: 35px; line-height: 100px; font: 400 72px/100px "Liberation Serif", serif; color: #2f4e49; letter-spacing: 1px; }
.cards { display: flex; margin-top: 34px; height: 800px; }
.clusters-card { width: 1399px; flex: none; border: 2px solid #66747c; border-radius: 30px; padding: 50px 48px 0; position: relative; }
.clusters-card h2 { font-size: 38px; line-height: 50px; font-weight: 700; color: #10232f; white-space: nowrap; }
.card-tab { margin-top: 65px; width: 200px; height: 50px; font-size: 27px; font-weight: 700; color: #1d4a41; position: relative; line-height: 40px; padding-left: 32px; }
.card-tab::after { content: ""; position: absolute; left: 0; right: 0; bottom: -14px; height: 8px; border-radius: 8px 8px 0 0; background: #215a48; }
.scrollbar { position: absolute; left: 400px; top: 745px; width: 597px; height: 11px; border-radius: 6px; background: linear-gradient(90deg, #245747 50%, #45696c 100%); }
.gutter { width: 52px; flex: none; background: #64787c; }
.right-col { flex: 1; margin-right: -49px; }
.rc-top { height: 162px; border-bottom: 2px solid #64717a; }
.rc-res { height: 333px; padding-top: 44px; border-bottom: 2px solid #64717a; font-size: 28px; color: #1c3d80; }
.rc-title { width: 352px; text-align: right; font-size: 30px; line-height: 40px; color: #10232f; font-weight: 500; white-space: nowrap; }
.rc-link { display: block; height: 41px; line-height: 41px; text-align: right; white-space: nowrap; }
.rc-l1 { width: 302px; margin-top: 76px; }
.rc-l2 { width: 502px; }
.rc-l3 { width: 519px; }
.rc-news { height: 272px; padding-top: 160px; border-bottom: 2px solid #64717a; font-size: 28px; color: #14293a; white-space: nowrap; line-height: 40px; padding-left: 170px; }
.ext-i { width: 20px; height: 20px; color: inherit; }
.ext-sup { vertical-align: 10px; margin-left: -2px; }
.collapse { position: absolute; left: 337px; top: 1141px; width: 60px; height: 60px; border-radius: 50%; background: #6b7880; box-shadow: 0 2px 6px rgba(0,0,0,.12); display: flex; align-items: center; justify-content: center; }
.collapse svg { width: 18px; height: 26px; }
.guide { position: absolute; left: 1914px; top: 927px; width: 512px; height: 304px; background: #0a1f2e; border-radius: 40px; color: #5e6d75; font-size: 28px; white-space: nowrap; }
.guide::after { content: ""; position: absolute; left: 100px; bottom: -8px; width: 40px; height: 20px; background: #0a1f2e; border-radius: 0 0 12px 12px; }
.g-l1, .g-l2 { position: absolute; text-align: right; line-height: 41px; }
.g-l1 { right: 62px; top: 72px; }
.g-l2 { right: 105px; top: 113px; }
.got-it { position: absolute; right: 32px; bottom: 24px; width: 117px; height: 55px; border: 2px solid #2e7048; border-radius: 10px; background: #17383a; color: #5f7a74; font-weight: 700; font-size: 27px; display: flex; align-items: center; justify-content: center; }
.chat { position: absolute; left: 2569px; top: 1100px; width: 96px; height: 96px; border-radius: 50%; background: #0a1f2e; display: flex; align-items: center; justify-content: center; box-shadow: 0 2px 8px rgba(0,0,0,.2); }
.chat svg { width: 46px; height: 52px; margin-top: 4px; }

/* dock */
.dock {
  margin: 4px 20px 0; height: 52px; flex: none; border: 2px solid #3b3b3b; border-radius: 14px; position: relative;
  background: linear-gradient(90deg, #161616 40%, #2b2320 46%, #2a1f1b 56%, #2a1914 66%, #191716 74%, #161616 100%);
  display: flex; align-items: flex-start; padding: 7px 0 0 1px;
}
.dk { width: 36.200px; flex: none; display: flex; flex-direction: column; align-items: center; }
.dk > i { width: 5px; height: 5px; border-radius: 50%; margin-top: 7px; }
.dk > i.on { background: #8a8a8a; }
.app { width: 26px; height: 26px; border-radius: 6px; display: block; overflow: hidden; position: relative; background: #fff; font-family: Inter, sans-serif; }
.app svg { width: 26px; height: 26px; display: block; }
.a-finder { background: linear-gradient(90deg, #2b8af0 50%, #d9ecfb 50%); }
.a-launch { background: #9a9a9a; }
.a-msg { background: #55c85a; }
.a-mail { background: linear-gradient(#4fa8f5, #2a6de0); }
.a-white { background: #fff; }
.a-cal { background: #fff; text-align: center; color: #222; line-height: 1; }
.a-cal b { display: block; height: 8px; background: #e8503f; color: #fff; font-size: 6px; line-height: 8px; }
.a-cal em { font-style: normal; font-size: 16px; line-height: 17px; display: block; }
.a-music { background: #ea4a58; }
.a-set { background: #8e8e8e; overflow: visible; }
.d-badge { position: absolute; right: -5px; top: -6px; width: 12px; height: 12px; border-radius: 50%; background: #e2483c; }
.a-iph { background: #b0b0b0; }
.a-prev { background: linear-gradient(#b8cde8 50%, #e8eef6 50%); }
.a-term { background: #151515; border: 1px solid #bbb; }
.a-disc { background: #5865f2; }
.a-gh { background: #5f2d9c; }
.a-post { background: #f0733f; }
.a-zoom { background: #1b5cf0; color: #fff; font-size: 7.500px; font-weight: 600; line-height: 26px; text-align: center; }
.a-store { background: #2f8fe8; }
.dock-sep { width: 2px; height: 34px; background: #666; flex: none; margin: 0 5px 0 12px; }
.dock-sep2 { margin: 0 6px 0 13px; }
.dk-doc { height: 30px; }
.doc { width: 18px; height: 30px; background: #e4e4e4; display: block; margin-top: -2px; }
.thumb { width: 36.100px; flex: none; position: relative; height: 36px; }
.thumb::before { content: ""; position: absolute; left: 3px; top: 5px; width: 30px; height: 24px; background: rgba(255,255,255,.05); }
.thumb svg { position: absolute; left: 22px; top: 19px; width: 10px; height: 11px; background: #fff; border-radius: 2px; }
.th-lilac::before { background: linear-gradient(#f0eff5, #c2c2e6 60%, #e8e8ee); top: 5px; height: 24px; }
.th-tall0::before { background: rgba(255,255,255,.07); top: 0; height: 30px; }
.th-tallg::before { background: repeating-linear-gradient(#555 0 2px, #333 2px 4px); top: -1px; height: 30px; width: 28px; left: 4px; }
.th-navy::before { background: #1b2a4a; top: 6px; height: 22px; }
.th-bw::before { background: linear-gradient(90deg, #222 30%, #eee 30%, #ddd 55%, #222 55%); top: 6px; height: 22px; }
.th-white::before { background: #f6f6f6; top: 6px; height: 22px; }
.th-black::before { background: #050505; top: 6px; height: 22px; }
.th-page::before { background: linear-gradient(#ddd 0 3px, #fafafa 3px); top: 6px; height: 22px; }
.th-blue::before { background: linear-gradient(#eee 0 3px, #2478c8 3px 9px, #f5f5f5 9px); top: 6px; height: 22px; }
.th-txt::before { background: repeating-linear-gradient(#4a4a4a 0 2px, #2e2e2e 2px 4px); top: 6px; height: 22px; }
.th-purple::before { background: linear-gradient(#fff 0 4px, #5a2a9c 4px 20px, #fff 20px); top: 6px; height: 22px; }
.th-multi::before { background: linear-gradient(120deg, #f5f5f5 40%, #7aa9dc 60%, #f0a040 80%); top: 6px; height: 22px; }
.th-tallp::before { background: linear-gradient(#555, #888 50%, #444); top: -1px; height: 30px; }
.dk-trash { width: 26px; height: 30px; margin: -2px 0 0 20px; border-radius: 4px 4px 10px 10px; background: linear-gradient(90deg, #666, #bbb 50%, #666); flex: none; }

/* modal */
.modal {
  position: absolute; left: 552px; top: 280px; width: 1600px; height: 1357px; padding: 84px 60px 59px; background: #fff; border-radius: 46px;
  display: flex; flex-direction: column; font-size: 29.900px; color: #0a1f2e;
  box-shadow: 0 0 60px rgba(0,0,0,.12);
}
.modal-x { position: absolute; right: 59px; top: 76px; width: 30px; height: 30px; color: #5c6c75; }
.modal-title { font-weight: 400; font-size: 50.500px; line-height: 60px; color: #0a1f2e; }
.stepper { display: grid; grid-template-columns: repeat(3, 493px); margin-top: 19px; }
.step { display: flex; flex-direction: column; align-items: center; position: relative; color: #5c6c75; font-size: 28px; }
.step-n { width: 44px; height: 44px; border-radius: 50%; border: 2px solid #5c6c75; background: #fff; display: flex; align-items: center; justify-content: center; font-size: 24px; position: relative; z-index: 1; }
.step-l { margin-top: 12px; line-height: 30px; white-space: nowrap; }
.step:not(:last-child)::after { content: ""; position: absolute; left: 50%; width: 100%; top: 20px; height: 3px; background: #89979b; }
.step-on { color: #1b3a30; }
.step-on .step-n { border-color: #3e9c63; color: #1b5a3a; }
.step-on .step-l { font-weight: 700; }
.intro { margin-top: 74px; line-height: 39px; }
.lnk { color: #1e5fe6; white-space: nowrap; }
.lnk-tight { letter-spacing: -.9px; }
.num { font-size: 28px; letter-spacing: -1.400px; }
.ext-big { width: 28px; height: 28px; vertical-align: -1px; }
.ext-sup2 { width: 22px; height: 22px; vertical-align: 8px; margin-left: 3px; }
.steps { margin: 23px 0 0; padding: 0; }
.steps li + li { margin-top: 28px; }
.steps h3 { font-size: 32.500px; line-height: 40px; font-weight: 700; }
.ip-note { margin-top: 18px; line-height: 47px; }
.ok { width: 28px; height: 28px; margin: 0 14px 0 9px; vertical-align: -7px; }
.u1 { margin-top: 22px; line-height: 40px; white-space: nowrap; }
.u2 { margin-top: 20px; line-height: 40px; white-space: nowrap; }
.u3 { margin-top: 20px; line-height: 40px; white-space: nowrap; display: flex; align-items: center; }
.u3 b { font-weight: 700; font-size: 30.500px; }
.info { width: 28px; height: 28px; margin: 0 19px 0 5px; flex: none; }
.creds { display: flex; align-items: flex-start; margin-top: 42px; }
.fld { display: flex; flex-direction: column; flex: none; }
.fld > span:first-child { font-weight: 700; font-size: 30px; line-height: 40px; margin-bottom: 12px; }
.fld-u { width: 580px; margin-right: 41px; }
.fld-p { width: 579px; margin-right: 42px; }
.inp { height: 71px; width: 100%; border: 2px solid #8a979b; border-radius: 10px; padding: 0 24px; font: 400 29.500px Lato, sans-serif; color: #0a1f2e; background: #fff; }
.pw { height: 68px; border: 2px solid #d5dadb; border-radius: 8px; display: flex; align-items: center; padding: 0 24px 0 24px; color: #3d4a50; font-size: 30px; }
.pw em { font-style: normal; margin-left: auto; font-size: 21px; color: #8a959a; letter-spacing: .5px; }
button { font-family: inherit; cursor: pointer; }
.copy { width: 157px; height: 72px; margin-top: 50px; border: 0; border-radius: 10px; background: #2d694d; color: #fff; font-size: 29px; font-weight: 500; display: flex; align-items: center; justify-content: center; gap: 12px; padding: 0; }
.copy svg { width: 28px; height: 30px; flex: none; }
.create { align-self: flex-start; margin-top: 31px; width: 325px; height: 71px; border: 0; border-radius: 10px; background: #2d694d; color: #fff; font-size: 28.800px; font-weight: 500; padding: 0; }
.modal-foot { margin-top: auto; display: flex; justify-content: space-between; }
.ghost { height: 72px; padding: 0 22px; background: #f7f9f9; border: 2px solid #8a979b; border-radius: 10px; font-size: 28.500px; font-weight: 500; color: #0a1f2e; }
.ghost:first-child { width: 121px; padding: 0; }
.ghost:last-child { width: 413px; padding: 0; }
.tip { position: absolute; left: 1304px; top: 810px; width: 351px; height: 88px; padding-bottom: 2px; border-radius: 32px; background: #0a1f2e; color: #c8d0d4; font-size: 28px; display: flex; align-items: center; justify-content: center; white-space: nowrap; box-shadow: 0 6px 12px rgba(0,0,0,.1); }
.tip::after { content: ""; position: absolute; left: 67px; bottom: -10px; width: 20px; height: 20px; background: #0a1f2e; transform: rotate(45deg); border-radius: 0 0 6px 0; }
```
